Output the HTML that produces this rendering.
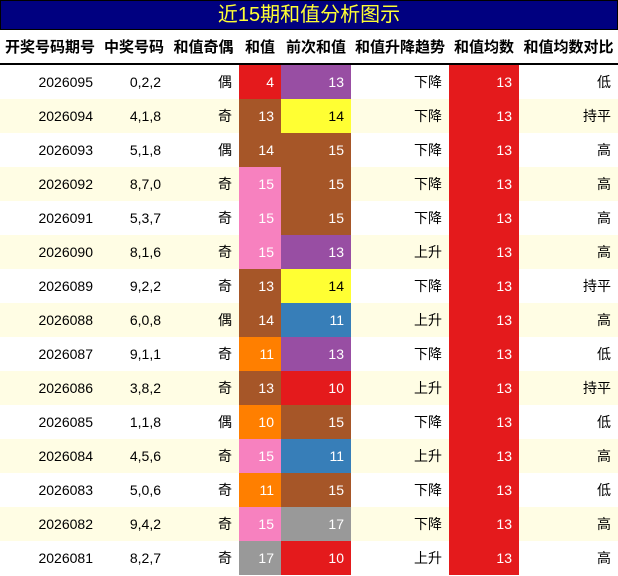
<!DOCTYPE html>
<html><head><meta charset="utf-8"><style>
body{margin:0;width:618px;height:576px;overflow:hidden;background:#fff;font-family:"Liberation Sans","Noto Sans CJK SC",sans-serif;}
.title{position:absolute;left:0;top:0;width:616px;height:28px;background:#000080;border:1px solid #000;color:#ffff33;font-size:20px;text-align:center;line-height:29px;}
table{position:absolute;left:0;top:30px;border-collapse:collapse;table-layout:fixed;width:618px;}
th{height:33px;font-size:15px;font-weight:bold;color:#000;text-align:center;padding:0;border-bottom:2px solid #000;white-space:nowrap;}
td{height:34px;padding:0 7px 0 0;text-align:right;font-size:14px;color:#000;}
tr.a td{background:#fffde4;}
.R{background:#e41a1c!important;color:#fff}.B{background:#a65628!important;color:#fff}.P{background:#984ea3!important;color:#fff}
.Y{background:#ffff33!important;color:#000}.K{background:#f781bf!important;color:#fff}.U{background:#377eb8!important;color:#fff}
.O{background:#ff7f00!important;color:#fff}.G{background:#999999!important;color:#fff}
</style></head><body>
<div class="title">近15期和值分析图示</div>
<table>
<colgroup><col style="width:100px"><col style="width:68px"><col style="width:71px"><col style="width:42px"><col style="width:70px"><col style="width:98px"><col style="width:70px"><col style="width:99px"></colgroup>
<tr><th>开奖号码期号</th><th>中奖号码</th><th>和值奇偶</th><th>和值</th><th>前次和值</th><th>和值升降趋势</th><th>和值均数</th><th>和值均数对比</th></tr>
<tr><td>2026095</td><td>0,2,2</td><td>偶</td><td class="R">4</td><td class="P">13</td><td>下降</td><td class="R">13</td><td>低</td></tr>
<tr class="a"><td>2026094</td><td>4,1,8</td><td>奇</td><td class="B">13</td><td class="Y">14</td><td>下降</td><td class="R">13</td><td>持平</td></tr>
<tr><td>2026093</td><td>5,1,8</td><td>偶</td><td class="B">14</td><td class="B">15</td><td>下降</td><td class="R">13</td><td>高</td></tr>
<tr class="a"><td>2026092</td><td>8,7,0</td><td>奇</td><td class="K">15</td><td class="B">15</td><td>下降</td><td class="R">13</td><td>高</td></tr>
<tr><td>2026091</td><td>5,3,7</td><td>奇</td><td class="K">15</td><td class="B">15</td><td>下降</td><td class="R">13</td><td>高</td></tr>
<tr class="a"><td>2026090</td><td>8,1,6</td><td>奇</td><td class="K">15</td><td class="P">13</td><td>上升</td><td class="R">13</td><td>高</td></tr>
<tr><td>2026089</td><td>9,2,2</td><td>奇</td><td class="B">13</td><td class="Y">14</td><td>下降</td><td class="R">13</td><td>持平</td></tr>
<tr class="a"><td>2026088</td><td>6,0,8</td><td>偶</td><td class="B">14</td><td class="U">11</td><td>上升</td><td class="R">13</td><td>高</td></tr>
<tr><td>2026087</td><td>9,1,1</td><td>奇</td><td class="O">11</td><td class="P">13</td><td>下降</td><td class="R">13</td><td>低</td></tr>
<tr class="a"><td>2026086</td><td>3,8,2</td><td>奇</td><td class="B">13</td><td class="R">10</td><td>上升</td><td class="R">13</td><td>持平</td></tr>
<tr><td>2026085</td><td>1,1,8</td><td>偶</td><td class="O">10</td><td class="B">15</td><td>下降</td><td class="R">13</td><td>低</td></tr>
<tr class="a"><td>2026084</td><td>4,5,6</td><td>奇</td><td class="K">15</td><td class="U">11</td><td>上升</td><td class="R">13</td><td>高</td></tr>
<tr><td>2026083</td><td>5,0,6</td><td>奇</td><td class="O">11</td><td class="B">15</td><td>下降</td><td class="R">13</td><td>低</td></tr>
<tr class="a"><td>2026082</td><td>9,4,2</td><td>奇</td><td class="K">15</td><td class="G">17</td><td>下降</td><td class="R">13</td><td>高</td></tr>
<tr><td>2026081</td><td>8,2,7</td><td>奇</td><td class="G">17</td><td class="R">10</td><td>上升</td><td class="R">13</td><td>高</td></tr>
</table>
</body></html>
